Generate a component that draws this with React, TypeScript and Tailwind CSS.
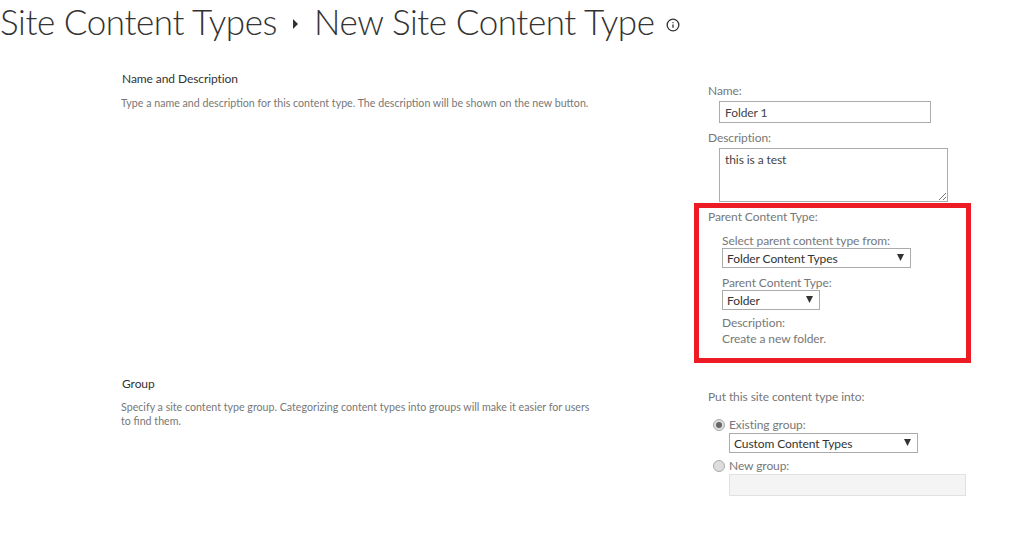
import { Info } from "lucide-react";

const Caret = () => (
  <svg width="7" height="7" viewBox="0 0 7 7" className="mb-px fill-[#333]">
    <path d="M0 0h7L3.5 7z" />
  </svg>
);

function FakeSelect({ label, className }: { label: string; className: string }) {
  return (
    <div className={"flex h-[20px] items-center justify-between border border-[#ababab] pl-[4px] tracking-[-0.08px] text-[#333] " + className}>
      <span className="pt-px">{label}</span>
      <Caret />
    </div>
  );
}

function Radio({ checked }: { checked?: boolean }) {
  return (
    <span className="flex size-[12px] items-center justify-center rounded-full border border-[#ababab] bg-[#ddd]">
      {checked && <span className="size-[6px] rounded-full bg-[#666]" />}
    </span>
  );
}

export default function App() {
  return (
    <div className="h-[533px] w-[1028px] overflow-hidden bg-white font-['Lato',sans-serif] text-[12px] tracking-[-0.08px] text-[#777]">
      <div className="flex h-[42px] items-center text-[35px] leading-[42px] font-light tracking-[-0.42px] text-[#333]">
        <span>Site Content Types</span>
        <span className="mx-[16px] mt-[6px] h-0 w-0 border-y-[5px] border-l-[5px] border-y-transparent border-l-[#333]" />
        <span>New Site Content Type</span>
        <Info className="mt-[8px] ml-[12px] size-[14px] text-[#333]" strokeWidth={2.25} />
      </div>

      <div className="mt-[28px] flex">
        <div className="w-[694px] pl-[121px]">
          <h2 className="pl-px leading-[18px] text-[#333]">Name and Description</h2>
          <p className="mt-[7px] text-[10.67px] leading-[16px] tracking-normal">
            Type a name and description for this content type. The description will be shown on the new button.
          </p>
        </div>
        <div className="w-[277px]">
          <div className="pt-[13px] pl-[14px] leading-[16px]">Name:</div>
          <div className="mt-[2px] ml-[25px] flex h-[22px] w-[212px] items-center border border-[#ababab] pt-px pl-[5px] text-[#444]">Folder 1</div>
          <div className="mt-[7px] pl-[14px] leading-[16px]">Description:</div>
          <div className="relative mt-[2px] ml-[25px] h-[54px] w-[229px] border border-[#ababab] px-[5px] pt-[3px] leading-[16px] text-[#444]">
            this is a test
            <svg width="9" height="9" viewBox="0 0 9 9" className="absolute right-0 bottom-0 stroke-[#777]">
              <path d="M1 8 8 1M5 8l3-3" fill="none" />
            </svg>
          </div>
          <div className="mt-px h-[160px] border-[5px] border-[#ed1c24] pt-[1px]">
            <div className="pl-[9px] leading-[16px]">Parent Content Type:</div>
            <div className="mt-[8px] pl-[23px] leading-[16px]">Select parent content type from:</div>
            <FakeSelect label="Folder Content Types" className="mt-[-1px] ml-[23px] w-[189px] pr-[6px]" />
            <div className="mt-[7px] pl-[23px] leading-[16px]">Parent Content Type:</div>
            <FakeSelect label="Folder" className="mt-[-1px] ml-[23px] w-[98px] pr-[6px]" />
            <div className="mt-[5px] pl-[23px] leading-[16px]">Description:</div>
            <div className="pl-[23px] leading-[16px]">Create a new folder.</div>
          </div>
        </div>
      </div>

      <div className="mt-[12px] flex">
        <div className="w-[694px] pl-[121px]">
          <h2 className="pl-px leading-[18px] text-[#333]">Group</h2>
          <p className="mt-[7px] w-[480px] text-[10.67px] leading-[14px] tracking-normal">
            Specify a site content type group. Categorizing content types into groups will make it easier for users to find them.
          </p>
        </div>
        <div className="w-[277px] pt-[14px]">
          <div className="pl-[14px] leading-[16px]">Put this site content type into:</div>
          <div className="mt-[12px] flex items-center gap-[4px] pl-[19px] leading-[16px]">
            <Radio checked />
            Existing group:
          </div>
          <FakeSelect label="Custom Content Types" className="ml-[35px] w-[189px] pr-[6px]" />
          <div className="mt-[5px] flex items-center gap-[4px] pl-[19px] leading-[16px]">
            <Radio />
            New group:
          </div>
          <div className="ml-[35px] h-[22px] w-[237px] border border-[#e1e1e1] bg-[#f4f4f4]" />
        </div>
      </div>
    </div>
  );
}
